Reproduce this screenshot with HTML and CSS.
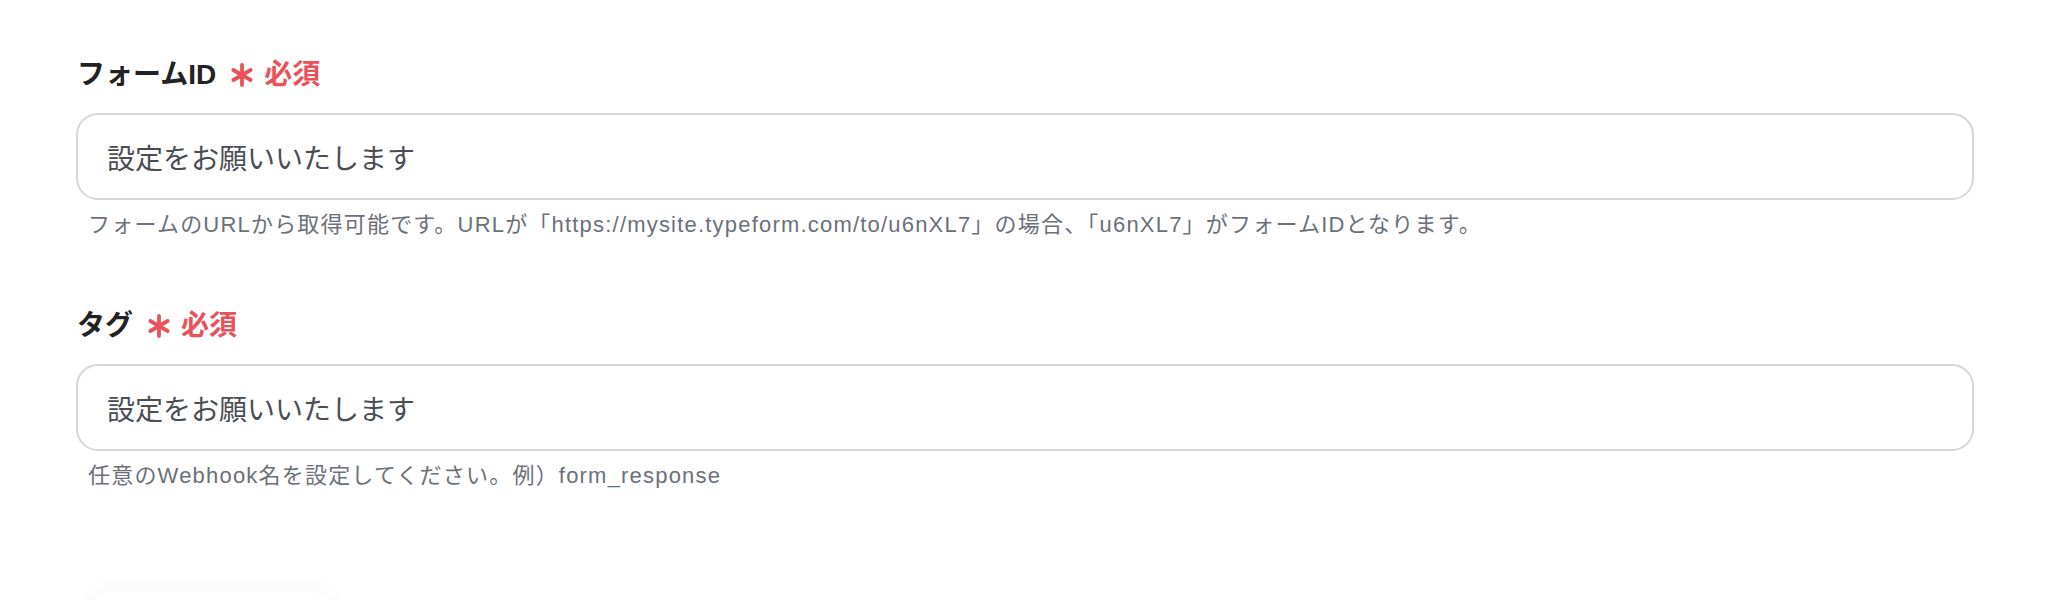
FILE: index.html
```html
<!DOCTYPE html>
<html lang="ja">
<head>
<meta charset="utf-8">
<title>フォーム設定</title>
<link rel="stylesheet" href="styles.css">
</head>
<body>
<div class="form">
  <div class="field">
    <div class="label">フォームID<span class="req"><svg class="ast" viewBox="0 0 24 24" width="24" height="24"><g stroke="#e9515b" stroke-width="3.8" stroke-linecap="round"><line x1="12" y1="2" x2="12" y2="22"/><line x1="3.34" y1="7" x2="20.66" y2="17"/><line x1="3.34" y1="17" x2="20.66" y2="7"/></g></svg>必須</span></div>
    <div class="input">設定をお願いいたします</div>
    <div class="help">フォームのURLから取得可能です。URLが「https://mysite.typeform.com/to/u6nXL7」の場合、「u6nXL7」がフォームIDとなります。</div>
  </div>
  <div class="field field-second">
    <div class="label">タグ<span class="req"><svg class="ast" viewBox="0 0 24 24" width="24" height="24"><g stroke="#e9515b" stroke-width="3.8" stroke-linecap="round"><line x1="12" y1="2" x2="12" y2="22"/><line x1="3.34" y1="7" x2="20.66" y2="17"/><line x1="3.34" y1="17" x2="20.66" y2="7"/></g></svg>必須</span></div>
    <div class="input">設定をお願いいたします</div>
    <div class="help">任意のWebhook名を設定してください。例）form_response</div>
  </div>
  <div class="footer">
    <div class="button-ghost"></div>
  </div>
</div>
</body>
</html>
```
FILE: styles.css
```css
html, body {
  margin: 0;
  padding: 0;
  background: #ffffff;
}
body {
  font-family: "Liberation Sans", "Noto Sans CJK JP", sans-serif;
  overflow: hidden;
  height: 600px;
}
.form {
  padding: 56px 0 0 76px;
  width: 1898px;
  display: flex;
  flex-direction: column;
}
.field {
  display: flex;
  flex-direction: column;
}
.field-second {
  margin-top: 67px;
}
.label {
  font-size: 28px;
  line-height: 38px;
  font-weight: bold;
  color: #222222;
  padding-left: 1px;
  display: flex;
  align-items: center;
}
.req {
  color: #e9515b;
  margin-left: 14px;
  display: flex;
  align-items: center;
}
.ast {
  display: block;
  margin-right: 10px;
}
.input {
  margin-top: 19px;
  box-sizing: border-box;
  height: 87px;
  border: 2px solid #d3d6da;
  border-radius: 22px;
  padding: 0 0 0 29px;
  display: flex;
  align-items: center;
  font-family: "Noto Sans CJK JP", sans-serif;
  font-size: 28px;
  color: #4a4e54;
}
.help {
  margin-top: 10px;
  padding-left: 12px;
  font-size: 22px;
  line-height: 30px;
  letter-spacing: 1.2px;
  color: #6b7079;
}
.footer {
  margin-top: 100px;
  padding-left: 10px;
}
.button-ghost {
  width: 250px;
  height: 60px;
  border-radius: 30px;
  box-shadow: 0 0 24px rgba(0, 0, 0, 0.04);
}
```
